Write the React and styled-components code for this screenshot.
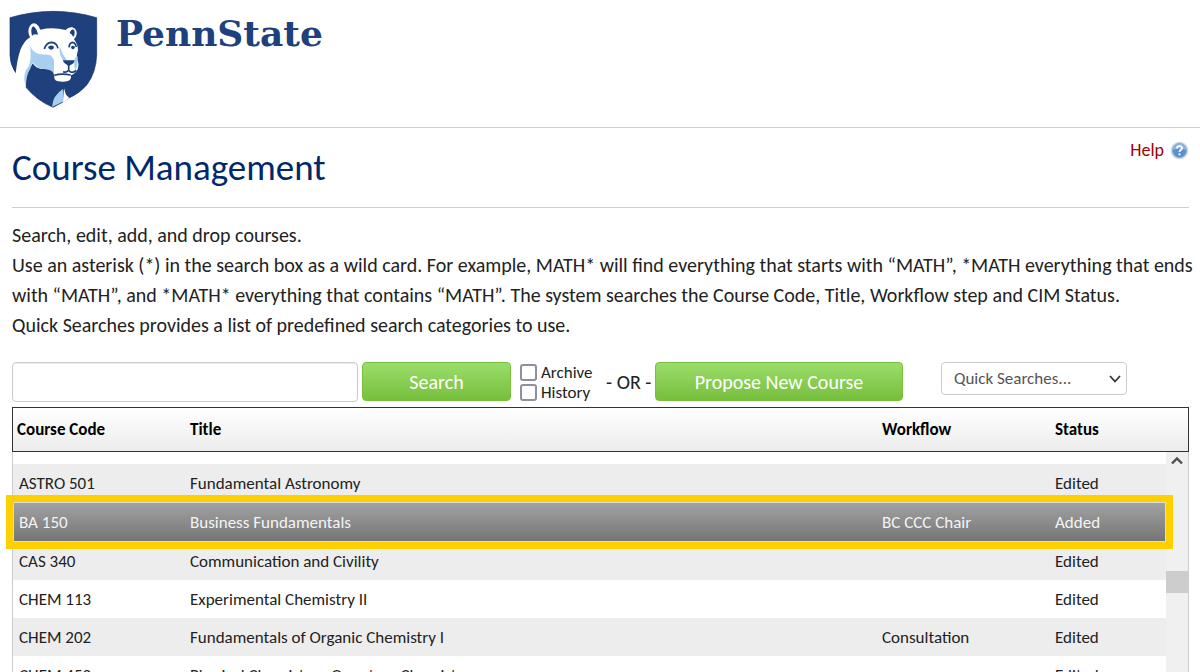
import styled, { createGlobalStyle } from 'styled-components';

const courses = [
  { code: 'ASTRO 501', title: 'Fundamental Astronomy', workflow: '', status: 'Edited' },
  { code: 'BA 150', title: 'Business Fundamentals', workflow: 'BC CCC Chair', status: 'Added' },
  { code: 'CAS 340', title: 'Communication and Civility', workflow: '', status: 'Edited' },
  { code: 'CHEM 113', title: 'Experimental Chemistry II', workflow: '', status: 'Edited' },
  {
    code: 'CHEM 202',
    title: 'Fundamentals of Organic Chemistry I',
    workflow: 'Consultation',
    status: 'Edited',
  },
  { code: 'CHEM 452', title: 'Physical Chemistry - Quantum Chemistry', workflow: '', status: 'Edited' },
];

const selectedCode = 'BA 150';

const Shield = () => (
  <svg width='90' height='99' viewBox='28 30 270 297' aria-hidden='true'>
    {/* shield */}
    <path
      d='M31 53 Q92 35 161 34 Q230 35 291 53 V165 Q289 218 262 254 Q240 280 208 294 L190 306 L160 322 Q112 302 79 262 L80 200 L48 218 Q31 194 31 165 Z'
      fill='#1e407c'
      stroke='#14306a'
      strokeWidth='2'
    />
    {/* head */}
    <path
      d='M48 220 Q53 176 62 150 Q72 124 91 112 Q81 91 91 77 Q99 67 109 71 Q118 76 122 89 Q159 80 198 90 Q206 80 218 82 Q232 86 231 103 Q229 113 223 118 Q235 135 235 150 Q230 165 232 178 Q240 190 234 208 Q227 222 213 226 Q217 238 205 243 Q190 247 172 243 Q162 239 164 228 L160 214 Q147 205 126 207 Q108 205 99 190 L88 210 Q76 229 79 263 Z'
      fill='#fff'
    />
    {/* shading */}
    <path
      d='M91 137 Q99 158 122 163 L145 164 Q158 166 163 180 L163 222 Q154 205 131 207 Q112 206 99 186 L91 208 Q78 228 79 263 L74 240 Q72 216 86 200 Q97 180 91 137 Z M180 140 Q188 164 202 181 L192 183 Q177 165 180 140 Z M225 176 Q236 160 234 180 Q236 200 226 210 Q221 192 225 176 Z M157 321 Q159 286 190 267 L192 304 Z'
      fill='#a9cff0'
    />
    <path d='M193 265 L199 284 L209 294 L190 308 Z' fill='#fff' />
    {/* ears and nose */}
    <path
      d='M97 107 Q91 84 101 79 Q111 85 115 104 Q105 101 97 107 Z M210 99 Q214 86 223 89 Q228 100 221 111 Q217 102 210 99 Z M190 181 H225 Q224 191 211 196 L207 200 L202 194 Q191 190 190 181 Z'
      fill='#1e407c'
    />
    {/* eyes */}
    <path
      d='M134 147 Q139 128 156 127 Q171 128 175 145 M208 142 Q209 128 219 127 Q227 128 230 141'
      fill='none'
      stroke='#1e407c'
      strokeWidth='5'
    />
    <path
      d='M145 141 Q153 132 163 140 Q162 149 154 149 Q146 148 145 141 Z M214 140 Q220 134 226 141 Q224 149 219 148 Q214 147 214 140 Z'
      fill='#1e407c'
    />
    {/* mouth */}
    <path
      d='M207 196 V211 Q201 219 190 215 M207 211 Q215 223 230 211 M164 226 Q185 219 213 225'
      fill='none'
      stroke='#1e407c'
      strokeWidth='5'
    />
  </svg>
);

const HelpIcon = () => (
  <svg width='19' height='19' viewBox='0 0 19 19' aria-hidden='true'>
    <circle cx='9.5' cy='9.5' r='9' fill='#cfddec' />
    <circle cx='9.5' cy='9.5' r='7' fill='#5b8fca' stroke='#7fa6d3' />
    <path d='M3 9 A6.5 6.5 0 0 1 16 9 Q9 6 3 9' fill='#8fb5de' />
    <path
      d='M7 7.5 Q7 5.2 9.5 5.2 Q12 5.2 12 7.2 Q12 8.3 10.7 9 Q9.5 9.7 9.5 11'
      fill='none'
      stroke='#fff'
      strokeWidth='1.8'
    />
    <circle cx='9.5' cy='13.3' r='1.1' fill='#fff' />
  </svg>
);

const Columns = ({ last }) => (
  <colgroup>
    <col style={{ width: 171 }} />
    <col />
    <col style={{ width: 173 }} />
    <col style={{ width: last }} />
  </colgroup>
);

const App = () => {
  return (
    <>
      <GlobalStyle />
      <Page>
        <Banner>
          <Shield />
          <Wordmark>PennState</Wordmark>
        </Banner>
        <Main>
          <TitleBar>
            <h1>Course Management</h1>
            <HelpLink href='#help'>
              Help
              <HelpIcon />
            </HelpLink>
          </TitleBar>
          <Intro>
            <p>Search, edit, add, and drop courses.</p>
            <p>
              Use an asterisk (*) in the search box as a wild card. For example, MATH* will find
              everything that starts with “MATH”, *MATH everything that ends with “MATH”, and
              *MATH* everything that contains “MATH”. The system searches the Course Code, Title,
              Workflow step and CIM Status.
            </p>
            <p>Quick Searches provides a list of predefined search categories to use.</p>
          </Intro>
          <SearchBar>
            <SearchInput type='text' aria-label='Search courses' />
            <GreenButton $width='149px'>Search</GreenButton>
            <Checks>
              <label>
                <input type='checkbox' />
                Archive
              </label>
              <label>
                <input type='checkbox' />
                History
              </label>
            </Checks>
            <Or>- OR -</Or>
            <GreenButton $width='248px'>Propose New Course</GreenButton>
            <SelectBox>
              <select aria-label='Quick Searches'>
                <option>Quick Searches...</option>
              </select>
              <svg width='12' height='8' viewBox='0 0 12 8' aria-hidden='true'>
                <path d='M1 1 L6 6.5 L11 1' fill='none' stroke='#333' strokeWidth='1.8' />
              </svg>
            </SelectBox>
          </SearchBar>
          <HeadTable>
            <Columns last={139} />
            <thead>
              <tr>
                <th>Course Code</th>
                <th>Title</th>
                <th>Workflow</th>
                <th>Status</th>
              </tr>
            </thead>
          </HeadTable>
          <Results>
            <Rows>
              <BodyTable aria-label='Courses'>
                <Columns last={117} />
                <tbody>
                  {courses.map((course, i) => (
                    <Row
                      key={course.code}
                      $striped={i % 2 === 0}
                      $selected={course.code === selectedCode}
                    >
                      <td>{course.code}</td>
                      <td>{course.title}</td>
                      <td>{course.workflow}</td>
                      <td>{course.status}</td>
                    </Row>
                  ))}
                </tbody>
              </BodyTable>
            </Rows>
            <ScrollTrack>
              <svg width='12' height='9' viewBox='0 0 12 9' aria-hidden='true'>
                <path d='M1 7.5 L6 2.5 L11 7.5' fill='none' stroke='#505050' strokeWidth='2.4' />
              </svg>
              <ScrollThumb />
            </ScrollTrack>
          </Results>
        </Main>
      </Page>
    </>
  );
};

const GlobalStyle = createGlobalStyle`
  * {
    box-sizing: border-box;
  }
  body {
    margin: 0;
    background: #fff;
    color: #222;
    font-family: Carlito, Lato, sans-serif;
  }
  h1, p {
    margin: 0;
  }
  button, input, select {
    font-family: inherit;
  }
`;

const Page = styled.div`
  height: 100vh;
  overflow: hidden;
  display: flex;
  flex-direction: column;
`;

const Banner = styled.header`
  display: flex;
  align-items: flex-start;
  gap: 17px;
  height: 128px;
  flex-shrink: 0;
  padding: 10px 9px;
  border-bottom: 1px solid #d0d0d0;
`;

const Wordmark = styled.span`
  font-family: 'DejaVu Serif', serif;
  font-size: 36px;
  line-height: 46px;
  font-weight: 700;
  color: #1e407c;
`;

const Main = styled.main`
  flex: 1;
  min-height: 0;
  display: flex;
  flex-direction: column;
  padding: 0 11px 0 12px;
`;

const TitleBar = styled.div`
  display: flex;
  justify-content: space-between;
  align-items: flex-start;
  height: 80px;
  flex-shrink: 0;
  padding-top: 12px;
  border-bottom: 1px solid #d0d0d0;

  h1 {
    font-size: 37px;
    line-height: 56px;
    font-weight: 400;
    color: #00286b;
  }
`;

const HelpLink = styled.a`
  display: flex;
  align-items: center;
  gap: 6px;
  font-size: 18px;
  line-height: 20px;
  color: #a30000;
  text-decoration: none;
`;

const Intro = styled.div`
  margin-right: -8px;
  padding: 12px 0 22px;
  font-size: 20px;
  line-height: 30px;
`;

const SearchBar = styled.form`
  display: flex;
  align-items: flex-start;
  height: 45px;
  flex-shrink: 0;
`;

const SearchInput = styled.input`
  width: 346px;
  height: 40px;
  margin-right: 4px;
  border: 1px solid #ccc;
  border-radius: 4px;
  box-shadow: inset 0 1px 1px rgba(0, 0, 0, 0.08);
  font-size: 17px;
`;

const GreenButton = styled.button.attrs({ type: 'button' })`
  width: ${(props) => props.$width};
  height: 39px;
  padding: 0;
  border: 1px solid #77c13a;
  border-radius: 4px;
  background: linear-gradient(#9bdd6b, #77bf3d);
  color: #fff;
  font-size: 20px;
`;

const Checks = styled.div`
  display: flex;
  flex-direction: column;
  width: 95px;
  padding-left: 9px;

  label {
    display: flex;
    align-items: center;
    gap: 4px;
    height: 20px;
    font-size: 17px;
  }
  input {
    appearance: none;
    width: 17px;
    height: 17px;
    margin: 0;
    border: 2px solid #8f8f9d;
    border-radius: 3px;
    background: #fff;
  }
`;

const Or = styled.span`
  width: 49px;
  font-size: 20px;
  line-height: 40px;
  white-space: nowrap;
`;

const SelectBox = styled.div`
  position: relative;
  width: 186px;
  margin-left: 38px;

  select {
    appearance: none;
    width: 100%;
    height: 33px;
    padding: 0 12px;
    border: 1px solid #ccc;
    border-radius: 4px;
    background: #fff;
    color: #555;
    font-size: 17px;
  }
  svg {
    position: absolute;
    top: 13px;
    right: 6px;
    pointer-events: none;
  }
`;

const HeadTable = styled.table`
  width: 100%;
  flex-shrink: 0;
  table-layout: fixed;
  border-collapse: separate;
  border-spacing: 0;
  border: 1px solid #333;
  background: linear-gradient(#fff, #ececec);
  color: #000;
  font-size: 17px;
  line-height: 20px;

  th {
    height: 43px;
    padding: 0 6px;
    text-align: left;
    font-weight: 700;
  }
  th:first-child {
    padding-left: 4px;
  }
`;

const Results = styled.div`
  flex: 1;
  min-height: 0;
  display: flex;
  align-items: flex-start;
  border: 1px solid #ccc;
  border-width: 0 1px;
`;

const Rows = styled.div`
  flex: 1;
  min-width: 0;
  padding-top: 12px;
`;

const BodyTable = styled.table`
  width: 100%;
  table-layout: fixed;
  border-collapse: separate;
  border-spacing: 0;
  font-size: 17px;
  line-height: 20px;
`;

const Row = styled.tr`
  position: relative;
  height: ${(props) => (props.$selected ? '40px' : '38px')};
  background: ${(props) => (props.$striped ? '#ededed' : '#fff')};

  td {
    padding: 2px 6px 0;
    white-space: nowrap;
  }

  ${(props) =>
    props.$selected &&
    `
    background: linear-gradient(#a3a3a3, #747474);
    color: #f4f4f4;

    td:last-child::after {
      content: '';
      position: absolute;
      inset: -7px;
      z-index: 1;
      border: 7px solid #ffd000;
      box-shadow: inset 0 0 0 1px #ddd;
      pointer-events: none;
    }
  `}
`;

const ScrollTrack = styled.div`
  align-self: stretch;
  display: flex;
  flex-direction: column;
  align-items: center;
  width: 22px;
  padding-top: 4px;
  background: #f0f0f0;
`;

const ScrollThumb = styled.div`
  width: 100%;
  height: 22px;
  margin-top: 106px;
  background: #cdcdcd;
`;

export default App;
